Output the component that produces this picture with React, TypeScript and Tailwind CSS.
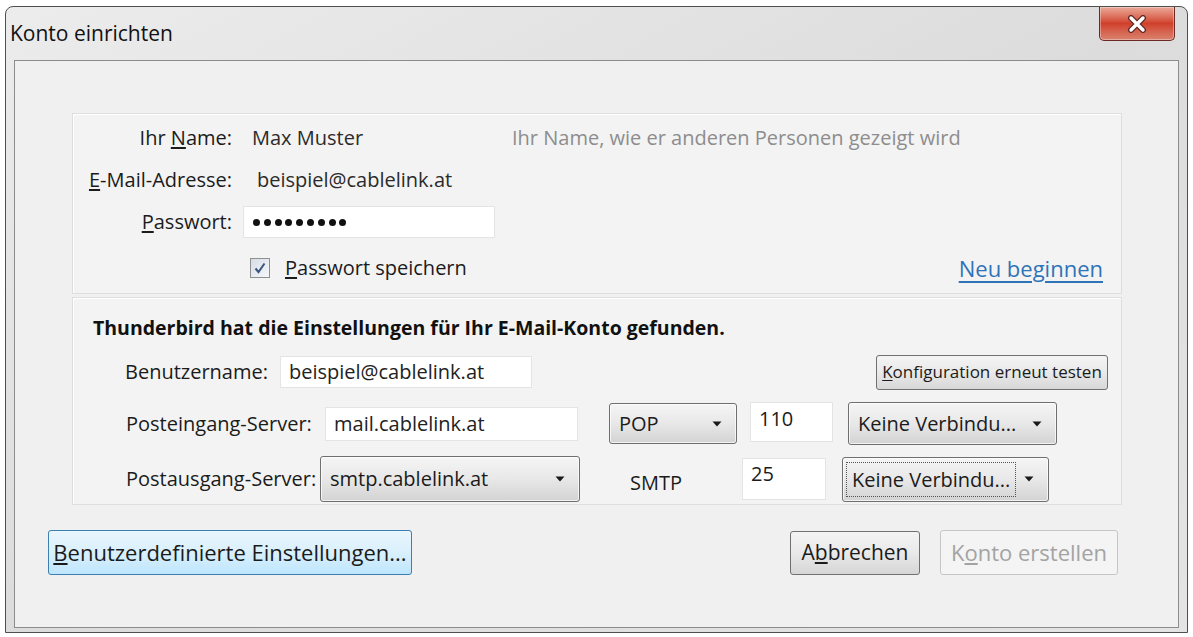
import type { ReactNode } from 'react';

function Arrow() {
  return (
    <svg width="10" height="6" viewBox="0 0 10 6" className="shrink-0">
      <path d="M0.5 0.5 L9.5 0.5 L5 5.5 Z" fill="#1a1a1a" />
    </svg>
  );
}

function Dropdown({
  label,
  className,
  focus,
}: {
  label: string;
  className: string;
  focus?: boolean;
}) {
  return (
    <div
      className={`flex items-center justify-between rounded-[3px] border border-[#6f6f6f] bg-linear-to-b from-[#f5f5f5] via-[#e8e8e8] to-[#d3d3d3] shadow-[inset_0_0_0_1px_rgba(255,255,255,0.7)] ${className}`}
    >
      <span
        className={
          focus
            ? 'ml-[3px] border border-dotted border-[#555] px-[5px] leading-[33px]'
            : 'pl-[9px]'
        }
      >
        {label}
      </span>
      <span className="pr-[14px]">
        <Arrow />
      </span>
    </div>
  );
}

function Field({ value, className }: { value: string; className: string }) {
  return (
    <div
      className={`flex items-center border border-[#e4e4e4] bg-white pl-[8px] text-[#222] ${className}`}
    >
      {value}
    </div>
  );
}

function Button({
  children,
  className,
}: {
  children: ReactNode;
  className: string;
}) {
  return (
    <div
      className={`flex items-center justify-center rounded-[3px] border ${className}`}
    >
      {children}
    </div>
  );
}

export default function App() {
  return (
    <div className="h-[637px] w-[1193px] overflow-hidden bg-white px-[5px] pt-[6px] pb-[4px] font-['Open_Sans',sans-serif] text-[20px] text-[#1b1b1b]">
      <div className="flex h-full flex-col rounded-t-[8px] border border-[#4f4f4f] bg-linear-to-br from-[#ececec] via-[#dcdcdc] to-[#e4e4e4] pb-[4px]">
        {/* title bar */}
        <div className="flex h-[53px] shrink-0 items-start justify-between pr-[12px] pl-[4px]">
          <div className="pt-[11px] text-[21px] text-[#111]">
            Konto einrichten
          </div>
          <div className="flex h-[34px] w-[76px] items-center justify-center rounded-b-[5px] border border-t-0 border-[#6b2a22] bg-linear-to-b from-[#e9a999] via-[#cf3f2b] to-[#d9826f] shadow-[inset_0_0_0_1px_rgba(255,255,255,0.35)]">
            <svg width="20" height="18" viewBox="0 0 20 18">
              <path
                d="M4 3 L16 15 M16 3 L4 15"
                stroke="#5a2a24"
                strokeWidth="6"
                strokeLinecap="round"
              />
              <path
                d="M4 3 L16 15 M16 3 L4 15"
                stroke="#ffffff"
                strokeWidth="3.4"
                strokeLinecap="round"
              />
            </svg>
          </div>
        </div>

        {/* client area */}
        <div className="mx-[8px] flex flex-1 flex-col border border-[#8c8c8c] bg-[#f0f0f0]">
          <div className="flex flex-col pt-[52px] pr-[56px] pl-[57px]">
            {/* group 1 */}
            <div className="flex h-[181px] flex-col border border-[#dedede] bg-[#f3f3f3] pt-[3px] shadow-[inset_1px_1px_0_#ffffff]">
              <div className="flex h-[42px] items-center">
                <div className="w-[159px] text-right">
                  Ihr <u className="underline-offset-2">N</u>ame:
                </div>
                <div className="ml-[20px] w-[260px] text-[#2b2b2b]">
                  Max Muster
                </div>
                <div className="text-[#8d8d8d]">
                  Ihr Name, wie er anderen Personen gezeigt wird
                </div>
              </div>
              <div className="flex h-[42px] items-center">
                <div className="w-[159px] text-right">
                  <u className="underline-offset-2">E</u>-Mail-Adresse:
                </div>
                <div className="ml-[25px] text-[#2b2b2b]">
                  beispiel@cablelink.at
                </div>
              </div>
              <div className="flex h-[42px] items-center">
                <div className="w-[159px] text-right">
                  <u className="underline-offset-2">P</u>asswort:
                </div>
                <div className="ml-[11px] flex h-[32px] w-[252px] items-center gap-[3.8px] border border-[#e4e4e4] bg-white pl-[9px]">
                  {[0, 1, 2, 3, 4, 5, 6, 7, 8].map((i) => (
                    <span
                      key={i}
                      className="h-[7px] w-[7px] rounded-full bg-[#111]"
                    />
                  ))}
                </div>
              </div>
              <div className="flex h-[50px] items-center">
                <div className="ml-[177px] flex h-[20px] w-[20px] items-center justify-center border border-[#8e8f8f] bg-linear-to-br from-[#d6dce6] to-[#f7f8fa]">
                  <svg width="14" height="14" viewBox="0 0 14 14">
                    <path
                      d="M2.5 7.5 L5.5 11 L11.5 2.5"
                      fill="none"
                      stroke="#3a5580"
                      strokeWidth="2"
                    />
                  </svg>
                </div>
                <div className="ml-[15px]">
                  <u className="underline-offset-2">P</u>asswort speichern
                </div>
                <div className="mr-[18px] ml-auto text-[22px] text-[#2f73b8] underline underline-offset-4">
                  Neu beginnen
                </div>
              </div>
            </div>

            {/* group 2 */}
            <div className="mt-[3px] flex h-[208px] flex-col border border-[#dedede] bg-[#f3f3f3] shadow-[inset_1px_1px_0_#ffffff]">
              <div className="mt-[18px] ml-[20px] text-[19.5px] leading-[24px] font-bold text-[#111]">
                Thunderbird hat die Einstellungen für Ihr E-Mail-Konto
                gefunden.
              </div>
              <div className="mt-[14px] flex h-[36px] items-center pl-[52px]">
                <div className="w-[155px]">Benutzername:</div>
                <Field
                  value="beispiel@cablelink.at"
                  className="h-[32px] w-[252px]"
                />
                <Button className="mr-[13px] ml-auto h-[35px] w-[232px] border-[#707070] bg-linear-to-b from-[#f4f4f4] via-[#e9e9e9] to-[#d8d8d8] text-[17px]">
                  <span>
                    <u className="underline-offset-2">K</u>onfiguration erneut
                    testen
                  </span>
                </Button>
              </div>
              <div className="mt-[12px] flex h-[43px] items-center pl-[53px]">
                <div className="w-[199px]">Posteingang-Server:</div>
                <Field
                  value="mail.cablelink.at"
                  className="h-[34px] w-[253px]"
                />
                <Dropdown label="POP" className="ml-[31px] h-[41px] w-[128px]" />
                <div className="ml-[13px] h-[40px] w-[83px] self-start border border-[#e4e4e4] bg-white pt-[1px] pl-[8px]">
                  110
                </div>
                <Dropdown
                  label="Keine Verbindu..."
                  className="ml-[15px] h-[43px] w-[209px]"
                />
              </div>
              <div className="mt-[11px] flex h-[46px] items-center pl-[53px]">
                <div className="w-[194px]">Postausgang-Server:</div>
                <Dropdown
                  label="smtp.cablelink.at"
                  className="h-[46px] w-[260px]"
                />
                <div className="ml-[50px] pt-[8px]">SMTP</div>
                <div className="ml-[60px] h-[42px] w-[84px] border border-[#e4e4e4] bg-white pl-[8px]">
                  25
                </div>
                <Dropdown
                  label="Keine Verbindu..."
                  className="ml-[16px] h-[45px] w-[207px]"
                  focus
                />
              </div>
            </div>
          </div>

          {/* buttons */}
          <div className="mt-[25px] flex items-center pr-[60px] pl-[33px]">
            <Button className="h-[45px] w-[364px] border-[#3c7fb1] bg-linear-to-b from-[#eaf6fd] via-[#d9f0fc] to-[#bee6fd] text-[22px]">
              <span>
                <u className="underline-offset-2">B</u>enutzerdefinierte
                Einstellungen...
              </span>
            </Button>
            <Button className="ml-auto h-[44px] w-[130px] border-[#707070] bg-linear-to-b from-[#f4f4f4] via-[#e9e9e9] to-[#d6d6d6] text-[21px]">
              <span>
                A<u className="underline-offset-2">b</u>brechen
              </span>
            </Button>
            <Button className="ml-[20px] h-[45px] w-[178px] border-[#c6c6c6] bg-[#f4f4f4] text-[22px] text-[#a3a3a3]">
              <span>
                K<u className="underline-offset-2">o</u>nto erstellen
              </span>
            </Button>
          </div>
        </div>
      </div>
    </div>
  );
}
